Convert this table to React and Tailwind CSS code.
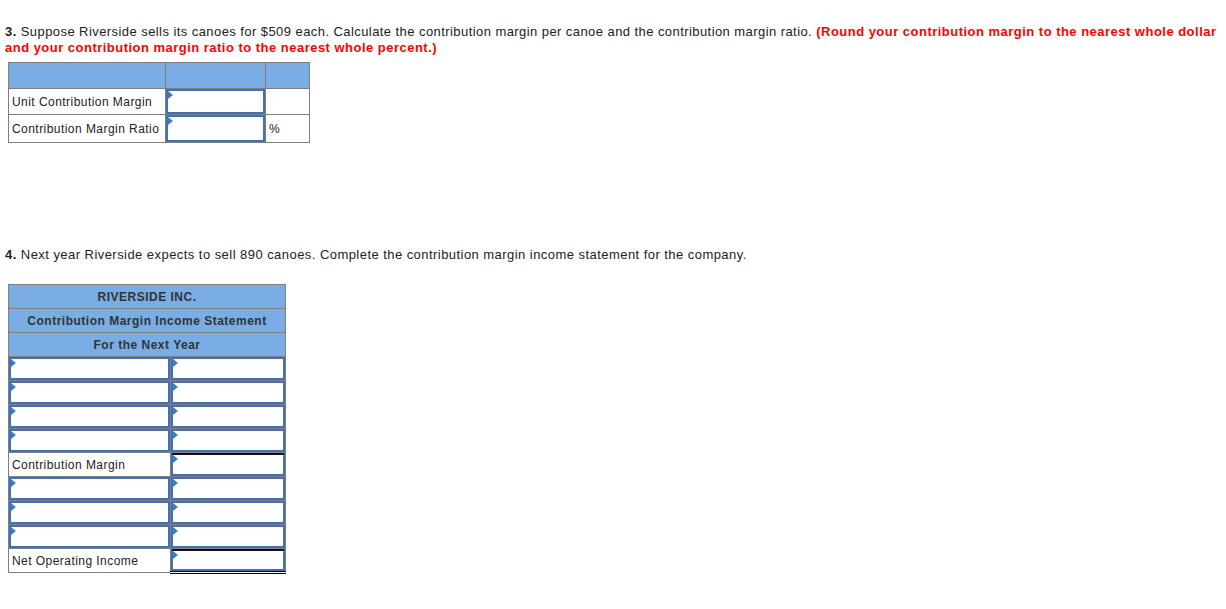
import React from "react";

const Tri = () => (
  <span className="absolute left-0 top-0 block w-0 h-0 border-t-[4px] border-b-[4px] border-l-[5px] border-t-transparent border-b-transparent border-l-[#3d7bc9]" />
);

const Input = ({ cls = "" }) => (
  <div className={"relative h-full w-full border-2 border-[#4270b1] bg-white " + cls}>
    <Tri />
  </div>
);

function Table1() {
  return (
    <table className="border-collapse ml-[8px] mt-[6px] text-[12px] tracking-[0.45px] text-[#222]">
      <tbody>
        <tr className="h-[26px]">
          <td className="border border-[#7f7f7f] bg-[#79ade3] w-[157px] p-0" />
          <td className="border border-[#7f7f7f] bg-[#79ade3] w-[100px] p-0" />
          <td className="border border-[#7f7f7f] bg-[#79ade3] w-[44px] p-0" />
        </tr>
        <tr className="h-[26px]">
          <td className="border border-[#7f7f7f] pl-[3px] p-0 whitespace-nowrap">Unit Contribution Margin</td>
          <td className="border border-[#7f7f7f] p-0 h-[26px]"><Input /></td>
          <td className="border border-[#7f7f7f] p-0" />
        </tr>
        <tr className="h-[28px]">
          <td className="border border-[#7f7f7f] pl-[3px] p-0 whitespace-nowrap">Contribution Margin Ratio</td>
          <td className="border border-[#7f7f7f] p-0 h-[28px]"><Input /></td>
          <td className="border border-[#7f7f7f] pl-[3px] p-0">%</td>
        </tr>
      </tbody>
    </table>
  );
}

function HeadRow({ children }) {
  return (
    <tr className="h-[24px]">
      <td colSpan={2} className="border border-[#7f7f7f] bg-[#79ade3] text-center font-bold tracking-[0.5px] text-[#333] p-0">
        {children}
      </td>
    </tr>
  );
}

function InRow() {
  return (
    <tr className="h-[24px]">
      <td className="border border-[#7f7f7f] p-0 h-[24px]"><Input /></td>
      <td className="border border-[#7f7f7f] p-0 h-[24px]"><Input /></td>
    </tr>
  );
}

function LabelRow({ label, topDark, dbl }) {
  return (
    <tr className="h-[24px]">
      <td className="border border-[#7f7f7f] pl-[3px] p-0 whitespace-nowrap">{label}</td>
      <td className={"border border-[#7f7f7f] p-0 h-[24px] " + (dbl ? "border-b-[3px] border-b-black border-double" : "")}>
        <Input cls={topDark ? "border-t-[#111]" : ""} />
      </td>
    </tr>
  );
}

function Table2() {
  return (
    <table className="border-collapse ml-[8px] mt-[21px] text-[12px] tracking-[0.45px] text-[#222]">
      <tbody>
        <HeadRow>RIVERSIDE INC.</HeadRow>
        <HeadRow>Contribution Margin Income Statement</HeadRow>
        <HeadRow>For the Next Year</HeadRow>
        <tr className="h-[24px]">
          <td className="border border-[#7f7f7f] p-0 w-[162px] h-[24px]"><Input /></td>
          <td className="border border-[#7f7f7f] p-0 w-[115px] h-[24px]"><Input /></td>
        </tr>
        <InRow />
        <InRow />
        <InRow />
        <LabelRow label="Contribution Margin" topDark />
        <InRow />
        <InRow />
        <InRow />
        <LabelRow label="Net Operating Income" topDark dbl />
      </tbody>
    </table>
  );
}

export default function App() {
  return (
    <div className="bg-white min-h-[609px] w-[1226px] text-[13px] text-[#222]" style={{ fontFamily: '"Liberation Sans", Arial, sans-serif' }}>
      <div className="pt-[24px] pl-[5px] leading-[16px] tracking-[0.43px] whitespace-nowrap">
        <b>3.</b> Suppose Riverside sells its canoes for $509 each. Calculate the contribution margin per canoe and the contribution margin ratio.{" "}
        <b className="text-[#ff0000] tracking-[0.48px]">(Round your contribution margin to the nearest whole dollar<br />and your contribution margin ratio to the nearest whole percent.)</b>
      </div>
      <Table1 />
      <div className="pl-[5px] leading-[16px] mt-[104px] tracking-[0.45px]">
        <b>4.</b> Next year Riverside expects to sell 890 canoes. Complete the contribution margin income statement for the company.
      </div>
      <Table2 />
    </div>
  );
}
